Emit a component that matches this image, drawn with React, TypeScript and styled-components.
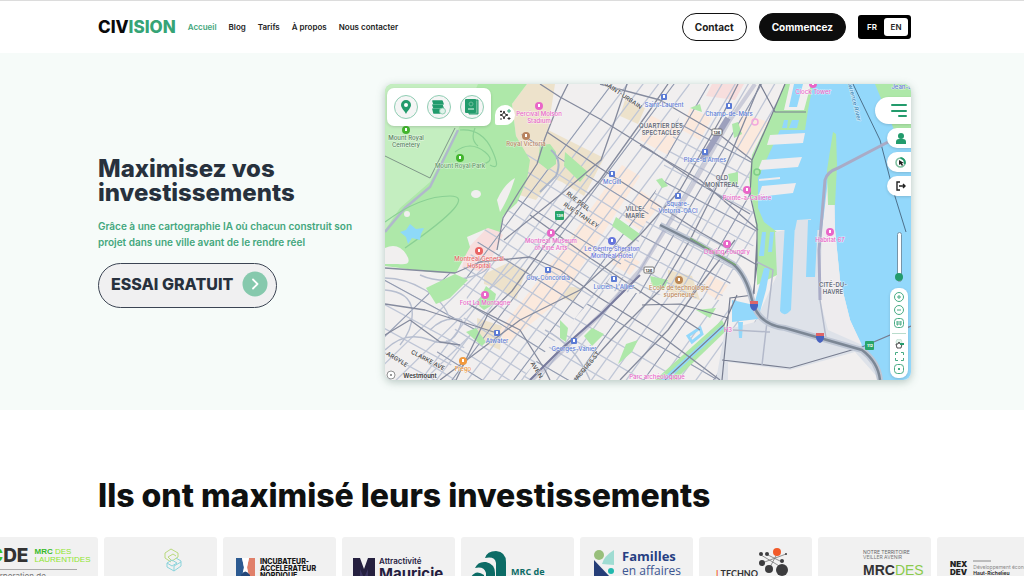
import React from 'react';
import styled, { createGlobalStyle, css } from 'styled-components';

const GlobalStyle = createGlobalStyle`
  * { box-sizing: border-box; }
  html { scrollbar-width: none; }
  body {
    margin: 0;
    background: #fff;
    color: #0f1111;
    font-family: Inter, "Liberation Sans", sans-serif;
    overflow-x: hidden;
  }
  h1, h2, p { margin: 0; }
  button { font: inherit; padding: 0; border: 0; cursor: pointer; }
  svg { display: block; }
`;

/* ---------- header ---------- */

const Header = styled.header`
  display: flex;
  align-items: center;
  height: 53px;
  padding: 0 113px 1px 98px;
  border-top: 1px solid #dcdcdc;
  background: #fff;
`;

const Brand = styled.a`
  margin-right: 12px;
  color: #0a0a0a;
  font-size: 17px;
  font-weight: 800;
  line-height: 20px;
  text-decoration: none;
`;

const BrandAccent = styled.span`
  color: #36a476;
`;

const Nav = styled.nav`
  display: flex;
  flex: 1;
  gap: 12px;
`;

const NavLink = styled.a<{ $active?: boolean }>`
  color: ${(p) => (p.$active ? '#3fa67c' : '#222')};
  font-size: 8px;
  font-weight: 600;
  line-height: 12px;
  text-decoration: none;
  white-space: nowrap;
`;

const Actions = styled.div`
  display: flex;
  align-items: center;
  gap: 12px;
`;

const PillLink = styled.a<{ $solid?: boolean }>`
  padding: 0 12px;
  border: 1px solid #111;
  border-radius: 14px;
  background: ${(p) => (p.$solid ? '#0d0d0d' : '#fff')};
  color: ${(p) => (p.$solid ? '#fff' : '#1c1c1c')};
  font-size: 10px;
  font-weight: 700;
  line-height: 26px;
  text-decoration: none;
`;

const LangSwitch = styled.div`
  display: flex;
  gap: 1px;
  padding: 3px;
  border-radius: 3px;
  background: #000;
`;

const LangButton = styled.button<{ $active?: boolean }>`
  width: ${(p) => (p.$active ? 24 : 22)}px;
  border-radius: 3px;
  background: ${(p) => (p.$active ? '#fff' : 'transparent')};
  color: ${(p) => (p.$active ? '#222' : '#fff')};
  font-size: 8px;
  font-weight: 600;
  line-height: 18px;
`;

/* ---------- hero ---------- */

const Hero = styled.section`
  display: flex;
  align-items: center;
  padding: 31px 113px 30px 98px;
  background: #f6fbf9;
`;

const Pitch = styled.div`
  flex: 0 0 287px;
`;

const HeroTitle = styled.h1`
  color: #27313d;
  font-size: 24px;
  font-weight: 800;
  line-height: 24px;
`;

const HeroText = styled.p`
  margin-top: 13px;
  color: #43a77d;
  font-size: 10px;
  font-weight: 600;
  line-height: 16px;
`;

const TrialButton = styled.button`
  display: flex;
  align-items: center;
  gap: 9px;
  height: 45px;
  margin-top: 13px;
  padding: 0 8px 2px 12px;
  border: 1px solid #3b4453;
  border-radius: 23px;
  background: #f0f0f1;
  color: #27313d;
  font-size: 16px;
  font-weight: 800;
`;

const MapFrame = styled.div`
  position: relative;
  flex: 1;
  aspect-ratio: 526 / 296;
  border-radius: 8px;
  overflow: hidden;
  box-shadow: 0 2px 8px rgba(60, 100, 85, 0.35);
`;

const MapToolbar = styled.div`
  position: absolute;
  top: 4px;
  left: 2px;
  display: flex;
  gap: 9px;
  padding: 7px;
  border-radius: 7px;
  background: #fff;
  box-shadow: 0 1px 3px rgba(0, 0, 0, 0.15);
`;

const RoundTool = styled.button`
  display: grid;
  place-items: center;
  width: 24px;
  height: 24px;
  border: 1px solid #8fcdb3;
  border-radius: 50%;
  background: #f5f5f5;
`;

const MagicTool = styled.button`
  position: absolute;
  top: 21px;
  left: 110px;
  display: grid;
  place-items: center;
  width: 20px;
  height: 20px;
  border-radius: 10px 10px 10px 2px;
  background: #fff;
`;

const SideTabs = styled.div`
  position: absolute;
  top: 13px;
  right: 0;
  display: flex;
  flex-direction: column;
  align-items: flex-end;
  gap: 4px;
`;

const SideTab = styled.button<{ $large?: boolean }>`
  display: grid;
  place-items: center;
  border-radius: 14px 0 0 14px;
  background: #fff;
  box-shadow: 0 1px 3px rgba(0, 0, 0, 0.15);
  ${(p) =>
    p.$large
      ? css`
          width: 36px;
          height: 27px;
          padding-left: 12px;
        `
      : css`
          width: 24px;
          height: 20px;
          padding-left: 3px;
        `}
`;

const ZoomRange = styled.input`
  position: absolute;
  top: 148px;
  right: 7px;
  width: 10px;
  height: 50px;
  margin: 0;
  appearance: none;
  background: transparent;
  writing-mode: vertical-lr;
  direction: rtl;
  &::-webkit-slider-runnable-track {
    width: 5px;
    height: 50px;
    border: 1px solid #7694a8;
    border-radius: 3px;
    background: #fff;
  }
  &::-webkit-slider-thumb {
    appearance: none;
    width: 8px;
    height: 8px;
    margin-left: -3px;
    border-radius: 50%;
    background: #239b6c;
  }
`;

const ViewPanel = styled.div`
  position: absolute;
  right: 3px;
  bottom: 2px;
  display: flex;
  flex-direction: column;
  align-items: center;
  gap: 3px;
  width: 18px;
  padding: 4px 0;
  border-radius: 8px;
  background: #fff;
  box-shadow: 0 1px 3px rgba(0, 0, 0, 0.15);
`;

const ViewButton = styled.button`
  background: transparent;
`;

const Divider = styled.hr`
  width: 14px;
  margin: 2px 0;
  border: 0;
  border-top: 1px solid #b9dccc;
`;

/* ---------- clients ---------- */

const Clients = styled.section`
  padding-top: 67px;
  overflow: hidden;
`;

const ClientsTitle = styled.h2`
  padding: 0 98px;
  color: #0f1111;
  font-size: 32px;
  font-weight: 800;
  line-height: 38px;
  white-space: nowrap;
`;

const LogoTrack = styled.div`
  display: flex;
  gap: 6px;
  margin: 22px 0 0 -15px;
`;

const LogoCard = styled.div<{ $top: number; $left: number; $gap?: number }>`
  display: flex;
  flex: 0 0 113px;
  align-items: flex-start;
  gap: ${(p) => p.$gap ?? 5}px;
  height: 72px;
  padding: ${(p) => p.$top}px 0 0 ${(p) => p.$left}px;
  border-radius: 3px;
  background: #f1f1f1;
  overflow: hidden;
`;

const Lines = styled.div<{ $top?: number }>`
  display: flex;
  flex-direction: column;
  padding-top: ${(p) => p.$top ?? 0}px;
`;

const Word = styled.span<{ $size: number; $line: number; $color: string; $weight?: number; $family?: string }>`
  color: ${(p) => p.$color};
  font-family: ${(p) => p.$family ?? 'Inter'}, sans-serif;
  font-size: ${(p) => p.$size}px;
  font-weight: ${(p) => p.$weight ?? 400};
  line-height: ${(p) => p.$line}px;
  white-space: nowrap;
`;

const Stack = styled.div`
  display: flex;
  flex-direction: column;
`;

const Row = styled.div`
  display: flex;
  align-items: center;
  gap: 6px;
`;

const Rule = styled.div`
  width: 88px;
  margin: 3px 0 2px;
  border-top: 1px solid #aaa;
`;

/* ---------- map drawing ---------- */

type Grid = { x: number; y: number; dx: number; dy: number; len: number; sx: number; sy: number; n: number };

// Parallel streets: every step-th of n segments, each shifted by (sx, sy) from the one before.
const streets = ({ x, y, dx, dy, len, sx, sy, n }: Grid, step = 1) =>
  Array.from({ length: n }, (_, i) => (i % step ? '' : `M${x + sx * i} ${y + sy * i}l${dx * len} ${dy * len}`)).join('');

const zones = [
  {
    id: 'west',
    area: 'M385 266L455 274L495 262L540 255L500 300L440 380H385Z',
    grids: [
      { x: 340, y: 380, dx: 0.72, dy: -0.7, len: 220, sx: 24, sy: 4, n: 8 },
      { x: 375, y: 275, dx: 0.88, dy: 0.48, len: 190, sx: -4, sy: 22, n: 6 },
    ],
  },
  {
    id: 'centre',
    area: 'M530 84H690L640 240L600 290L520 380H415L470 310L460 274L515 175Z',
    grids: [
      { x: 390, y: 380, dx: 0.6, dy: -0.8, len: 400, sx: 14, sy: 2, n: 24 },
      { x: 450, y: 90, dx: 0.85, dy: 0.53, len: 320, sx: -3, sy: 15, n: 22 },
    ],
  },
  {
    id: 'old',
    area: 'M690 84H785L750 170L757 240L720 300L600 290L640 240Z',
    grids: [
      { x: 560, y: 340, dx: 0.5, dy: -0.86, len: 340, sx: 12, sy: 2, n: 22 },
      { x: 560, y: 60, dx: 0.88, dy: 0.47, len: 300, sx: -1, sy: 16, n: 17 },
    ],
  },
  {
    id: 'south',
    area: 'M600 290L720 300L757 300V330L720 380H520Z',
    grids: [
      { x: 490, y: 400, dx: 0.58, dy: -0.81, len: 200, sx: 16, sy: 2, n: 16 },
      { x: 520, y: 265, dx: 0.86, dy: 0.5, len: 250, sx: -3, sy: 20, n: 9 },
    ],
  },
];

const mainRoads = [
  'M497 250L503 218L520 190L537 164L545 138L560 100L568 84',
  'M504 240L560 195L601 160L615 120L627 84',
  'M385 268L455 273L480 262L530 257L560 270L600 298L660 335L720 380',
  'M540 84L560 97L600 119L650 150L700 184L750 214',
  'M547 132L600 168L650 200L700 232L757 265',
  'M456 380L488 314L512 291L550 238L600 180L650 110L668 84',
  'M640 145L700 180L758 230',
  'M530 215L590 258L650 298L700 330',
  'M440 380L520 320L580 290L640 235L680 190L720 120L738 84',
  'M575 380L620 330L660 290L690 240L720 180L760 84',
  'M600 84L660 100L720 135L752 160',
  'M620 380L668 330L700 285L735 240',
  'M385 335L410 320L440 342L460 345',
  'M470 305L520 330L545 370L550 380',
  'M385 304L425 310L500 334',
];

type Poi = { x: number; y: number; text: string[]; color: string; shape?: 'square' };

const pois: Poi[] = [
  { x: 406, y: 130, text: ['Mount Royal', 'Cemetery'], color: '#54815c' },
  { x: 460, y: 158, text: ['Mount Royal Park'], color: '#619767' },
  { x: 539, y: 106, text: ['Percival Molson', 'Stadium'], color: '#e966c8' },
  { x: 526, y: 136, text: ['Royal Victoria'], color: '#b8835f' },
  { x: 612, y: 174, text: ['McGill'], color: '#5b7bd5', shape: 'square' },
  { x: 664, y: 97, text: ['Saint-Laurent'], color: '#5b7bd5', shape: 'square' },
  { x: 729, y: 106, text: ['Champ-de-Mars'], color: '#5b7bd5', shape: 'square' },
  { x: 705, y: 152, text: ["Place-d'Armes"], color: '#5b7bd5', shape: 'square' },
  { x: 678, y: 196, text: ['Square-', 'Victoria-OACI'], color: '#5b7bd5', shape: 'square' },
  { x: 747, y: 190, text: ['Pointe-à-Callière'], color: '#e966c8' },
  { x: 813, y: 84, text: ['Clock Tower'], color: '#e966c8' },
  { x: 830, y: 232, text: ['Habitat 67'], color: '#e966c8' },
  { x: 551, y: 233, text: ['Montreal Museum', 'of Fine Arts'], color: '#e966c8' },
  { x: 612, y: 241, text: ['Le Centre Sheraton', 'Montreal Hotel'], color: '#6675dc' },
  { x: 479, y: 251, text: ['Montreal General', 'Hospital'], color: '#e96363' },
  { x: 548, y: 270, text: ['Guy-Concordia'], color: '#5b7bd5', shape: 'square' },
  { x: 614, y: 279, text: ["Lucien-L'Allier"], color: '#5b7bd5', shape: 'square' },
  { x: 485, y: 295, text: ['Fort La Montagne'], color: '#e966c8' },
  { x: 497, y: 333, text: ['Atwater'], color: '#5b7bd5', shape: 'square' },
  { x: 574, y: 341, text: ['Georges-Vanier'], color: '#5b7bd5', shape: 'square' },
  { x: 463, y: 361, text: ['Frego'], color: '#f19a3e' },
  { x: 727, y: 244, text: ['Darling Foundry'], color: '#e966c8' },
  { x: 679, y: 280, text: ['École de technologie', 'supérieure'], color: '#bd8854' },
];

const districts = [
  { x: 661, y: 128, lines: ['QUARTIER DES', 'SPECTACLES'] },
  { x: 722, y: 180, lines: ['OLD', 'MONTREAL'] },
  { x: 635, y: 211, lines: ['VILLE-', 'MARIE'] },
  { x: 833, y: 287, lines: ['CITÉ-DU-', 'HAVRE'] },
];

const Label = styled.text<{ $bold?: boolean }>`
  font-family: Inter, sans-serif;
  font-size: 6px;
  font-weight: ${(p) => (p.$bold ? 600 : 500)};
  text-anchor: middle;
  paint-order: stroke;
  stroke: rgba(255, 255, 255, 0.6);
  stroke-width: 1px;
`;

const CityMap = () => (
  <svg viewBox="385 84 526 296" width="100%" height="100%" preserveAspectRatio="xMidYMid slice" role="img" aria-label="Carte de Montréal">
    <defs>
      {zones.map((z) => (
        <clipPath id={`zone-${z.id}`} key={z.id}>
          <path d={z.area} />
        </clipPath>
      ))}
    </defs>
    <rect x="385" y="84" width="526" height="296" fill="#f1efef" />

    {/* campus and commercial blocks */}
    <path d="M527 84L512 104L516 136L528 172L516 194L536 200L552 178L562 182L584 196L604 158L548 130L555 84Z" fill="#ede2cb" />
    <path d="M625 100L645 108L638 124L620 116ZM484 274L510 262L526 270L516 300L502 290L484 284ZM555 285L582 288L574 302L554 296ZM477 318L502 326L500 350L478 340ZM668 270L692 276L700 300L668 292Z" fill="#ede2cb" />
    <path d="M622 165L640 176L560 300L505 345L500 330L560 252ZM650 115L680 130L668 155L640 140ZM640 190L660 205L640 230L625 220ZM690 108L712 118L700 140L682 130ZM740 112L768 122L748 155L736 150ZM710 275L728 285L718 300L702 290ZM620 250L640 262L630 275L612 264Z" fill="#fbe9dd" />
    <path d="M466 250L490 225L503 235L485 272L462 268ZM712 84H744L735 100L706 96Z" fill="#f7dedd" />

    {/* street grids */}
    {zones.map((z) => (
      <g key={z.id} clipPath={`url(#zone-${z.id})`} fill="none">
        <path d={z.grids.map((g) => streets(g)).join('')} stroke="#bfc6d6" strokeWidth="1.3" />
        <path d={z.grids.map((g) => streets(g, 4)).join('')} stroke="#9198ab" strokeWidth="1" />
      </g>
    ))}
    <path d="M385 278Q405 278 425 290T450 320M385 290Q410 292 412 310T400 345M420 275Q440 284 466 278T488 262M385 350Q405 330 430 340T462 320M430 330Q445 315 462 320M545 330Q575 345 590 380" fill="none" stroke="#b7becf" strokeWidth="1.4" />

    {/* parks */}
    <path d="M385 84H527L512 104L516 136L530 160L527 180L517 203L503 216L500 232L488 228L467 237L470 247L456 273L430 272L385 266Z" fill="#aee8a9" />
    <path d="M385 84H478L458 130L430 182L400 208L385 230Z" fill="#c4eec0" />
    <path d="M497 200Q504 184 515 178Q508 200 500 212Z" fill="#f1efef" />
    <path d="M458 130L430 187L405 208L385 232" fill="none" stroke="#b0b9cb" strokeWidth="2.5" />
    <path d="M455 128L430 178L385 156" fill="none" stroke="#7f9688" strokeWidth="1" />
    <path d="M460 130Q482 128 492 150T490 165M455 152Q470 140 485 152T470 166M385 222Q420 196 450 196T405 248M475 128Q470 140 478 146" fill="none" stroke="#8ad094" strokeWidth="1.2" />
    <path d="M385 248Q398 242 406 254T398 264H385Z" fill="#f1efef" />
    <path d="M400 232L406 230L410 224L416 229L424 228L421 234L420 240L412 238L408 244L406 237Z" fill="#8ed9f8" />
    <ellipse cx="476" cy="194" rx="5" ry="4" fill="#f1efef" />
    <circle cx="407" cy="214" r="3" fill="#f1efef" />
    <path d="M426 288L455 274L468 280L450 298L436 304ZM477 304L486 286L496 294L494 304L484 310ZM466 332L476 328L486 342L482 346ZM540 145L550 144L556 152L556 164L548 170L538 162ZM565 152L588 172L580 182L564 166ZM616 217L640 234L634 242L612 226ZM560 320L568 328L566 342L560 338ZM584 336L592 328L604 334L592 346ZM626 344L638 340L632 352L618 364ZM732 124L738 122L742 134L734 138ZM728 174L738 172L738 184L730 184ZM656 180L662 178L668 186L662 188ZM690 108L700 104L702 112ZM650 276L668 280L664 290L652 286ZM696 310L716 308L710 318Z" fill="#aee8a9" />
    <path d="M551 150Q563 160 556 176L540 192" fill="none" stroke="#a9b4c8" strokeWidth="2" />

    {/* river, docks and quays */}
    <path d="M792 84H911V380H878L873 363L862 347L850 320L840 280L835 230H757L752 196L764 150L778 118Z" fill="#93d8fb" />
    <path d="M785 84L773 112L752 155L749 180L757 232L757 285L777 275L777 232L764 222L758 208L758 178L780 130L805 130L808 110L813 84Z" fill="#aee8a9" />
    <path d="M790 84H811L804 110H784Z" fill="#f1efef" />
    <path d="M794 84H803L797 107H789Z" fill="#93d8fb" />
    <path d="M784 120H788L787 128H782ZM792 120H799L797 128H789Z" fill="#93d8fb" />
    <path d="M770 135L805 133L803 143L767 145ZM762 160L802 157L798 167L758 170ZM762 186L796 183L793 193L758 197ZM759 179L780 177L780 179L759 181Z" fill="#eeecee" />
    <path d="M775 232L786 230L795 230L797 220L811 219L812 230L822 230L829 190L834 168L835 230L840 280L850 320L862 347L880 380H716L725 330L755 322L777 275Z" fill="#dee2e9" />
    <path d="M822 230L829 172L834 172L835 230L840 280L850 320L862 345L828 330L820 300Z" fill="#eeecee" />
    <path d="M833 132L836 134L837 165L835 205L828 205L827 170Z" fill="#aee8a9" />
    <path d="M785 222H795L791 310Q784 318 780 311ZM808 220H818L815 277H806ZM762 232H766L764 256H759ZM770 232H774L772 252H768Z" fill="#93d8fb" />
    <path d="M764 268L754 305L732 300L732 322L758 319L766 290L770 268ZM738 322L743 322L742 338L739 338Z" fill="#93d8fb" />
    <path d="M655 380L722 320L727 330L675 380Z" fill="#aee8a9" />
    <path d="M661 380L722 325L724 328L668 380Z" fill="#93d8fb" />
    <path d="M688 336L700 328L702 334L692 342Z" fill="none" stroke="#93d8fb" strokeWidth="3" />
    <path d="M875 84H911V140L895 132Z" fill="#aee8a9" />
    <path d="M728 362L790 370L855 352L880 380H728Z" fill="#f1efef" />

    {/* major streets */}
    {mainRoads.map((d) => (
      <path key={d} d={d} fill="none" stroke="#858b9e" strokeWidth="1.3" strokeLinejoin="round" />
    ))}
    <path d="M785 84L773 112L752 160L750 195L757 225V265L753 295L730 298L722 380M760 84L775 112H806M665 380L724 325L737 295M722 360L790 368L862 347L911 326M757 238L754 294M642 305L680 304L728 318" fill="none" stroke="#777d90" strokeWidth="1.2" />
    <path d="M853 84L880 140L893 190L906 232" fill="none" stroke="#4d708b" strokeWidth="1" />
    <path d="M820 300L819 250L825 180Q827 172 838 168L888 142" fill="none" stroke="#a9abc6" strokeWidth="3" />
    <path d="M820 300L826 338M733 330L770 332M762 365L773 270L757 262" fill="none" stroke="#b3b9ca" strokeWidth="1.5" />

    {/* railway and motorway */}
    <path d="M532 380L600 315L640 270L690 190L730 120L755 84" fill="none" stroke="#a5a9c4" strokeWidth="4" strokeOpacity="0.5" />
    <path d="M702 160L728 118" fill="none" stroke="#9da0bd" strokeWidth="6" />
    <path d="M530 380L560 350L600 315L640 275" fill="none" stroke="#777a9d" strokeWidth="2" />
    <path d="M660 225L700 245L733 264Q746 275 752 300T785 328L862 350Q878 362 880 380" fill="none" stroke="#bec6d4" strokeWidth="6" />
    <path d="M660 225L700 245L733 264Q746 275 752 300T785 328L862 350Q878 362 880 380" fill="none" stroke="#7c8795" strokeWidth="2.5" />
    <path d="M690 238L736 265" stroke="#78aa72" strokeWidth="1.3" />

    {/* route shields */}
    <rect x="555" y="211" width="9" height="9" rx="1" fill="#28a568" />
    <rect x="865" y="341" width="9" height="9" rx="1" fill="#28a568" />
    {[[754, 305], [820, 337]].map(([x, y]) => (
      <g key={x}>
        <path d={`M${x - 4} ${y - 4}h8v5q-1 4-4 5q-3-1-4-5z`} fill="#4862be" />
        <path d={`M${x - 4} ${y - 4}h8v3h-8z`} fill="#df6467" />
      </g>
    ))}
    {[[717, 132], [649, 270]].map(([x, y]) => (
      <g key={x}>
        <rect x={x - 5} y={y - 3} width="10" height="6" rx="1" fill="#fff" stroke="#555" strokeWidth="0.8" />
        <text x={x} y={y + 2} fontSize="4" fontWeight="700" textAnchor="middle" fill="#444">136</text>
      </g>
    ))}
    <text x="560" y="217" fontSize="4" fontWeight="700" textAnchor="middle" fill="#fff">138</text>
    <text x="870" y="347" fontSize="4" fontWeight="700" textAnchor="middle" fill="#fff">112</text>

    {/* street names */}
    <Label $bold fill="#555" transform="translate(622 97) rotate(34)">SAINT-URBAIN</Label>
    <Label $bold fill="#555" transform="translate(577 203) rotate(38)">RUE PEEL</Label>
    <Label $bold fill="#555" transform="translate(580 217) rotate(34)">RUE STANLEY</Label>
    <Label $bold fill="#555" transform="translate(427 362) rotate(28)">CLARKE AVE</Label>
    <Label $bold fill="#555" transform="translate(396 361) rotate(32)">ARGYLE</Label>
    <Label $bold fill="#555" transform="translate(588 368) rotate(-50)">JACQUES ST</Label>
    <Label $bold fill="#555" transform="translate(535 371) rotate(58)">AVE N</Label>
    <Label fill="#3c84b4" transform="translate(852 100) rotate(76)">Lawrence River</Label>
    <Label fill="#6675dc" x="902" y="89">Jean-D</Label>
    <Label fill="#e966c8" x="728" y="332">H3</Label>
    <Label fill="#e966c8" x="657" y="379">Parc archéologique</Label>
    <Label $bold fill="#333" x="420" y="378">Westmount</Label>
    <circle cx="391" cy="375" r="4" fill="#fff" stroke="#777" strokeWidth="0.8" />
    <circle cx="391" cy="375" r="1" fill="#777" />
    <circle cx="755" cy="122" r="3" fill="none" stroke="#f3a8dd" strokeWidth="1.5" />
    <circle cx="757" cy="172" r="3" fill="none" stroke="#7fcf88" strokeWidth="1.5" />

    {pois.map((p) => (
      <g key={p.text[0]}>
        {p.shape === 'square' ? (
          <rect x={p.x - 3} y={p.y - 3} width="6" height="6" rx="1" fill={p.color} />
        ) : (
          <circle cx={p.x} cy={p.y} r="4" fill={p.color === '#54815c' || p.color === '#619767' ? '#42b52e' : p.color} />
        )}
        <rect x={p.x - 1} y={p.y - 2} width="2" height="3" fill="#fff" />
        {p.text.map((t, i) => (
          <Label key={t} x={p.x} y={p.y + 10 + i * 7} fill={p.color}>{t}</Label>
        ))}
      </g>
    ))}
    {districts.map((d) =>
      d.lines.map((t, i) => (
        <Label $bold key={t} x={d.x} y={d.y + i * 7} fill="#666b78">{t}</Label>
      )),
    )}
  </svg>
);

/* ---------- icons ---------- */

const green = '#239b6c';

const PinIcon = () => (
  <svg width="10" height="14" viewBox="0 0 10 14">
    <path d="M5 0a5 5 0 0 1 5 5c0 3-3 5-5 9C3 10 0 8 0 5a5 5 0 0 1 5-5z" fill={green} />
    <circle cx="5" cy="5" r="2" fill="#fff" />
  </svg>
);

const DataIcon = () => (
  <svg width="14" height="15" viewBox="0 0 14 15">
    <path d="M1 1h9l1 3H2zM1 5h9l1 3H2zM1 9h8l-1 4H2z" fill={green} stroke={green} strokeWidth="1.6" strokeLinejoin="round" />
    <path d="M1 4.5h10M1 8.5h10" stroke="#7cc6a6" strokeWidth="0.6" />
    <circle cx="10.5" cy="11" r="3" fill="#dff2e9" stroke="#7cc6a6" strokeWidth="0.8" />
  </svg>
);

const BookIcon = () => (
  <svg width="14" height="16" viewBox="0 0 14 16">
    <path d="M4 1h9v14H4z" fill="#6ebd9b" stroke={green} />
    <rect x="0" y="0" width="11" height="14" rx="1" fill={green} />
    <circle cx="6" cy="5" r="2" fill="none" stroke="#6ebd9b" />
    <path d="M3 10h6" stroke="#a9dec6" strokeWidth="1.5" />
  </svg>
);

const SparkIcon = () => (
  <svg width="12" height="12" viewBox="0 0 12 12" fill="none" stroke="#222" strokeWidth="0.9">
    <path d="M5 2L6 5L9 6L6 7L5 10L4 7L1 6L4 5Z" />
    <path d="M10 0v4M8 2h4" stroke={green} />
    <path d="M10 8v3M8.5 9.5h3M2 1.500v2M1 2.500h2M2 9v2" />
  </svg>
);

const MenuIcon = () => (
  <svg width="16" height="14" viewBox="0 0 16 14" stroke={green} strokeWidth="2" strokeLinecap="round">
    <path d="M1 1h14M1 7h14M8 12h7" />
  </svg>
);

const UserIcon = () => (
  <svg width="10" height="11" viewBox="0 0 10 11" fill={green}>
    <circle cx="5" cy="3" r="3" />
    <path d="M0 11V9q0-3 3-3h4q3 0 3 3v2z" />
  </svg>
);

const TargetIcon = () => (
  <svg width="11" height="11" viewBox="0 0 11 11" fill="none">
    <circle cx="5.5" cy="5.5" r="4.5" stroke="#7cbf9f" strokeWidth="1.5" />
    <path d="M5.5 1a4.5 4.5 0 0 1 4 6" stroke={green} strokeWidth="2" />
    <path d="M4 3v5l1.500-1L7 9l1-1-1-2h2z" fill="#222" />
  </svg>
);

const ExitIcon = () => (
  <svg width="10" height="10" viewBox="0 0 10 10" fill="none" stroke="#222" strokeWidth="1.4">
    <path d="M4 1H1v8h3M3 5h6M7 3l2 2-2 2" />
  </svg>
);

const ViewIcon = ({ d, square }: { d: string; square?: boolean }) => (
  <svg width="10" height="10" viewBox="0 0 10 10" fill="none" stroke="#48ab84">
    <rect x="0.5" y="0.5" width="9" height="9" rx={square ? 3 : 4.5} />
    <path d={d} />
  </svg>
);

const HandIcon = () => (
  <svg width="10" height="10" viewBox="0 0 10 10">
    <circle cx="5" cy="3" r="3" fill="#e3f3eb" stroke="#b9dccc" strokeWidth="0.6" />
    <path d="M2 5l1 4h4l1-4-2 0-1-2-1 2z" fill="#fff" stroke="#222" strokeWidth="0.8" />
    <path d="M6 5h4" stroke={green} strokeWidth="2" />
  </svg>
);

const FrameIcon = () => (
  <svg width="9" height="9" viewBox="0 0 9 9" fill="none" stroke="#48ab84">
    <path d="M0.5 3V0.500H3M6 0.500h2.500V3M8.500 6v2.500H6M3 8.500H0.500V6" />
  </svg>
);

const ArrowBadge = () => (
  <svg width="26" height="26" viewBox="0 0 26 26">
    <circle cx="13" cy="13" r="12.5" fill="#86c9ad" />
    <path d="M11 8.500l4.500 4.500-4.500 4.500" fill="none" stroke="#fff" strokeWidth="1.8" strokeLinecap="round" strokeLinejoin="round" />
  </svg>
);

/* ---------- page ---------- */

const links = ['Accueil', 'Blog', 'Tarifs', 'À propos', 'Nous contacter'];

export default function App() {
  return (
    <>
      <GlobalStyle />
      <Header>
        <Brand href="#">
          CIV<BrandAccent>ISION</BrandAccent>
        </Brand>
        <Nav>
          {links.map((l, i) => (
            <NavLink key={l} href="#" $active={i === 0}>{l}</NavLink>
          ))}
        </Nav>
        <Actions>
          <PillLink href="#">Contact</PillLink>
          <PillLink href="#" $solid>Commencez</PillLink>
          <LangSwitch>
            <LangButton>FR</LangButton>
            <LangButton $active>EN</LangButton>
          </LangSwitch>
        </Actions>
      </Header>

      <main>
        <Hero>
          <Pitch>
            <HeroTitle>
              Maximisez vos
              <br />
              investissements
            </HeroTitle>
            <HeroText>
              Grâce à une cartographie IA où chacun construit son
              <br />
              projet dans une ville avant de le rendre réel
            </HeroText>
            <TrialButton>
              ESSAI GRATUIT
              <ArrowBadge />
            </TrialButton>
          </Pitch>
          <MapFrame>
            <CityMap />
            <MapToolbar>
              <RoundTool aria-label="Lieux"><PinIcon /></RoundTool>
              <RoundTool aria-label="Données"><DataIcon /></RoundTool>
              <RoundTool aria-label="Rapports"><BookIcon /></RoundTool>
            </MapToolbar>
            <MagicTool aria-label="Assistant"><SparkIcon /></MagicTool>
            <SideTabs>
              <SideTab $large aria-label="Menu"><MenuIcon /></SideTab>
              <SideTab aria-label="Profil"><UserIcon /></SideTab>
              <SideTab aria-label="Centrer"><TargetIcon /></SideTab>
              <SideTab aria-label="Quitter"><ExitIcon /></SideTab>
            </SideTabs>
            <ZoomRange type="range" aria-label="Inclinaison" min={0} max={100} defaultValue={0} />
            <ViewPanel>
              <ViewButton aria-label="Agrandir"><ViewIcon d="M3 5h4M5 3v4" /></ViewButton>
              <ViewButton aria-label="Réduire"><ViewIcon d="M3 5h4" /></ViewButton>
              <ViewButton aria-label="Vue 3D"><ViewIcon square d="M3 3v4h1V3M6 3v4h1V3" /></ViewButton>
              <Divider />
              <ViewButton aria-label="Déplacer"><HandIcon /></ViewButton>
              <ViewButton aria-label="Cadrer"><FrameIcon /></ViewButton>
              <ViewButton aria-label="Recentrer"><ViewIcon square d="M4 4l2 2M6 4l-2 2" /></ViewButton>
            </ViewPanel>
          </MapFrame>
        </Hero>

        <Clients>
          <ClientsTitle>Ils ont maximisé leurs investissements</ClientsTitle>
          <LogoTrack>
            <LogoCard $top={9} $left={4}>
              <Stack>
                <Row>
                  <Word $size={19} $line={20} $color="#333" $weight={800}>
                    <Word as="span" $size={19} $line={20} $color="#3cc421" $weight={800}>C</Word>DE
                  </Word>
                  <Lines>
                    <Word $size={8} $line={8} $color="#8fe52f" $family="Liberation Sans">
                      <Word $size={8} $line={8} $color="#35b929" $weight={700} $family="Liberation Sans">MRC</Word> DES
                    </Word>
                    <Word $size={8} $line={8} $color="#8fe52f" $family="Liberation Sans">LAURENTIDES</Word>
                  </Lines>
                </Row>
                <Rule />
                <Word $size={8} $line={9} $color="#777">Corporation de</Word>
              </Stack>
            </LogoCard>

            <LogoCard $top={11} $left={59}>
              <svg width="20" height="24" viewBox="0 0 20 24" fill="none" strokeWidth="1">
                <path d="M2 5L8 1L15 5V9L9 13L5 9L10 6L13 8M2 5V10L8 14" stroke="#b9d97c" />
                <path d="M13 10L18 13V18L11 23L4 19V15L9 18L14 15L9 12L4 15M11 23V18L18 14" stroke="#8bd3db" />
              </svg>
            </LogoCard>

            <LogoCard $top={20} $left={13}>
              <svg width="19" height="24" viewBox="0 0 19 24">
                <path d="M0 1h6l2 10-2 13H0z" fill="#2c5a91" />
                <path d="M13 1h6v23h-6l-2-13z" fill="#e0806a" />
                <path d="M6 1h7l-2 9 3 14H5l3-14z" fill="#fff" />
                <path d="M5 18q4-7 9 0v6H5z" fill="#244778" />
              </svg>
              <Lines $top={1}>
                <Word $size={7} $line={7} $color="#161616" $weight={800}>INCUBATEUR-</Word>
                <Word $size={7} $line={7} $color="#161616" $weight={800}>ACCÉLÉRATEUR</Word>
                <Word $size={7} $line={7} $color="#161616" $weight={800}>NORDIQUE</Word>
              </Lines>
            </LogoCard>

            <LogoCard $top={20} $left={11} $gap={4}>
              <svg width="22" height="22" viewBox="0 0 22 22">
                <path d="M0 1h7l4 11 4-11h7v21H0z" fill="#25203f" />
                <path d="M7 22V12l4 9 4-9v10z" fill="#3b3560" />
              </svg>
              <Lines>
                <Word $size={8} $line={9} $color="#25203f" $weight={600}>Attractivité</Word>
                <Word $size={15} $line={15} $color="#25203f" $weight={700}>Mauricie</Word>
              </Lines>
            </LogoCard>

            <LogoCard $top={14} $left={10}>
              <svg width="35" height="30" viewBox="0 0 35 30">
                <path d="M14 7Q16 0 25 0Q35 1 35 11V30H25V12Q24 5 14 7Z" fill="#0c6c66" />
                <path d="M4 17Q7 10 15 11Q24 13 24 22V30H15V22Q13 15 4 17Z" fill="#0c6c66" />
                <path d="M0 26Q5 18 13 24V30H0Z" fill="#0c6c66" />
              </svg>
              <Lines $top={15}>
                <Word $size={9} $line={11} $color="#0c6c66" $weight={700} $family="Open Sans">MRC de</Word>
              </Lines>
            </LogoCard>

            <LogoCard $top={12} $left={14} $gap={8}>
              <svg width="20" height="28" viewBox="0 0 20 28">
                <circle cx="5" cy="6" r="5" fill="#98bf7b" />
                <path d="M20 1v15L8 15Q10 7 20 1z" fill="#9fdcd2" />
                <path d="M0 11L16 28H0z" fill="#263e78" />
                <circle cx="17" cy="22" r="3" fill="#22b8ae" />
              </svg>
              <Lines>
                <Word $size={13} $line={15} $color="#263f82" $weight={700} $family="Open Sans">Familles</Word>
                <Word $size={12} $line={14} $color="#3c5692" $family="Open Sans">en affaires</Word>
              </Lines>
            </LogoCard>

            <LogoCard $top={11} $left={17} $gap={0}>
              <Lines $top={20}>
                <Word $size={9} $line={11} $color="#333" $weight={700} $family="Lato">
                  <Word $size={9} $line={11} $color="#f15a29" $weight={900} $family="Lato">| </Word>
                  TECHNO
                </Word>
              </Lines>
              <svg width="32" height="30" viewBox="0 0 32 30" fill="#3c3c3e">
                <path d="M3 7L28 22M8 6L24 14M28 6L4 15M20 4L11 21" stroke="#777" strokeWidth="0.8" />
                <circle cx="19" cy="4" r="4" fill="#f15a29" />
                <circle cx="3" cy="6" r="2" /><circle cx="9" cy="6" r="2" /><circle cx="28" cy="6" r="1" />
                <circle cx="4" cy="15" r="3" /><circle cx="11" cy="21" r="4" />
                <circle cx="24" cy="13" r="2" /><circle cx="24" cy="22" r="6" />
              </svg>
            </LogoCard>

            <LogoCard $top={13} $left={45}>
              <Stack>
                <Word $size={5} $line={5} $color="#666">NOTRE TERRITOIRE</Word>
                <Word $size={5} $line={5} $color="#777">VEILLER AVENIR</Word>
                <Word $size={14} $line={20} $color="#8bcb4d" $family="Liberation Sans">
                  <Word $size={14} $line={20} $color="#333" $weight={700} $family="Liberation Sans">MRC</Word>DES
                </Word>
              </Stack>
            </LogoCard>

            <LogoCard $top={23} $left={13} $gap={6}>
              <Lines>
                <Word $size={8} $line={8} $color="#222" $weight={900}>NEX</Word>
                <Word $size={8} $line={8} $color="#222" $weight={900}>DEV</Word>
              </Lines>
              <Lines>
                <svg width="18" height="4" viewBox="0 0 18 4"><path d="M0 1h18" stroke="#888" /></svg>
                <Word $size={5} $line={6} $color="#888">Développement économique</Word>
                <Word $size={5} $line={6} $color="#333" $weight={700}>Haut-Richelieu</Word>
              </Lines>
            </LogoCard>
          </LogoTrack>
        </Clients>
      </main>
    </>
  );
}
